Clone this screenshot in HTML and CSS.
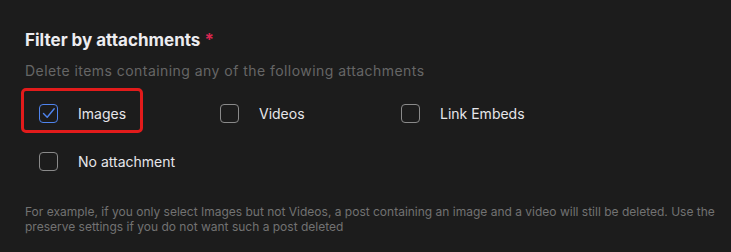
FILE: index.html
```html
<!DOCTYPE html>
<html>
<head>
<meta charset="utf-8">
<link rel="stylesheet" href="styles.css">
</head>
<body>
<div class="panel">
  <h2 class="title">Filter by attachments <span class="req">*</span></h2>
  <p class="sub">Delete items containing any of the following attachments</p>
  <div class="options">
    <label class="opt">
      <span class="box checked"><svg viewBox="0 0 20 20" width="20" height="20"><path d="M4.5 10.6 L8.2 14.2 L15.2 5.8" fill="none" stroke="#4f84ee" stroke-width="1.4" stroke-linecap="round" stroke-linejoin="round"/></svg></span>
      <span class="lbl">Images</span>
      <span class="highlight"></span>
    </label>
    <label class="opt"><span class="box"></span><span class="lbl">Videos</span></label>
    <label class="opt"><span class="box"></span><span class="lbl">Link Embeds</span></label>
    <label class="opt"><span class="box"></span><span class="lbl">No attachment</span></label>
  </div>
  <p class="note">For example, if you only select Images but not Videos, a post containing an image and a video will still be deleted. Use the preserve settings if you do not want such a post deleted</p>
</div>
</body>
</html>
```
FILE: styles.css
```css
html, body {
  margin: 0;
  padding: 0;
  background: #1c1c1c;
}
body {
  font-family: Inter, "Noto Sans", sans-serif;
  width: 731px;
  height: 252px;
  overflow: hidden;
}
.panel {
  padding: 29px 0 0 25px;
}
.title {
  margin: 0;
  font-size: 17px;
  font-weight: 700;
  line-height: 22px;
  color: #ececf0;
}
.req {
  color: #d8264f;
  font-weight: 700;
}
.sub {
  margin: 11px 0 0 0;
  font-size: 14px;
  line-height: 18px;
  letter-spacing: 0.45px;
  color: #666666;
}
.options {
  display: grid;
  grid-template-columns: 181px 181px 181px;
  row-gap: 28px;
  margin: 23px 0 0 14px;
}
.opt {
  position: relative;
  display: flex;
  align-items: center;
  height: 20px;
}
.box {
  width: 17px;
  height: 17px;
  border: 1.5px solid #8a8a8a;
  border-radius: 4px;
  flex: none;
  display: flex;
  align-items: center;
  justify-content: center;
}
.box.checked {
  border-color: #4f84ee;
}
.box svg {
  width: 20px;
  height: 20px;
  flex: none;
}
.lbl {
  margin-left: 20px;
  font-size: 14px;
  color: #e6e6ea;
}
.highlight {
  position: absolute;
  left: -18px;
  top: -15px;
  width: 116px;
  height: 39px;
  border: 3px solid #e21b1b;
  border-radius: 5px;
  pointer-events: none;
}
.note {
  margin: 33px 0 0 0;
  font-size: 12px;
  line-height: 15px;
  color: #727272;
  width: 700px;
}
```
